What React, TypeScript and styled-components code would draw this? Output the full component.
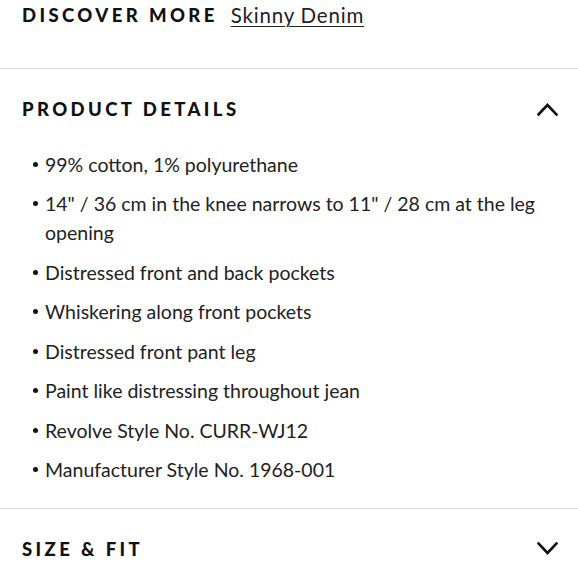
import React from "react";
import styled, { createGlobalStyle } from "styled-components";

const Global = createGlobalStyle`
  html, body { margin: 0; padding: 0; background: #fff; }
  body { font-family: "Lato", "Open Sans", sans-serif; color: #222; }
`;

const Page = styled.div`
  width: 578px;
`;

const DiscoverRow = styled.div`
  display: flex;
  align-items: center;
  gap: 13px;
  height: 30px;
  padding: 0 22px;
  margin-bottom: 38px;
`;

const Heading = styled.span`
  font-family: "Lato", sans-serif;
  font-weight: 900;
  font-size: 18.5px;
  letter-spacing: 3.4px;
  color: #111;
  text-transform: uppercase;
`;

const Link = styled.a`
  font-size: 20.5px;
  letter-spacing: 0.8px;
  color: #222;
  text-decoration: underline;
  text-underline-offset: 3px;
  text-decoration-thickness: 1px;
`;

const Section = styled.section`
  border-top: 1px solid #dcdcdc;
`;

const SectionHeader = styled.div`
  display: flex;
  align-items: center;
  justify-content: space-between;
  height: 80px;
  padding: 0 20px 0 22px;
`;

const List = styled.ul`
  list-style: none;
  margin: 0;
  padding: 0.5px 30px 23.5px 33px;
  display: flex;
  flex-direction: column;
  gap: 10.5px;
`;

const Item = styled.li`
  display: flex;
  font-size: 19.5px;
  line-height: 29px;
  color: #222;
`;

const Dot = styled.span`
  flex: none;
  width: 5px;
  height: 5px;
  border-radius: 50%;
  background: #111;
  margin: 12px 7px 0 0;
`;

const Chevron = ({ up }: { up?: boolean }) => (
  <svg width="21" height="13" viewBox="0 0 21 13" fill="none">
    <polyline
      points={up ? "1.5,11.5 10.5,2 19.5,11.5" : "1.5,1.5 10.5,11 19.5,1.5"}
      stroke="#111"
      strokeWidth="2.6"
      strokeLinecap="square"
    />
  </svg>
);

const items = [
  "99% cotton, 1% polyurethane",
  "14\" / 36 cm in the knee narrows to 11\" / 28 cm at the leg opening",
  "Distressed front and back pockets",
  "Whiskering along front pockets",
  "Distressed front pant leg",
  "Paint like distressing throughout jean",
  "Revolve Style No. CURR-WJ12",
  "Manufacturer Style No. 1968-001",
];

export default function App() {
  return (
    <Page>
      <Global />
      <DiscoverRow>
        <Heading>Discover More</Heading>
        <Link href="#">Skinny Denim</Link>
      </DiscoverRow>
      <Section>
        <SectionHeader>
          <Heading>Product Details</Heading>
          <Chevron up />
        </SectionHeader>
        <List>
          {items.map((t) => (
            <Item key={t}>
              <Dot />
              <span>{t}</span>
            </Item>
          ))}
        </List>
      </Section>
      <Section>
        <SectionHeader>
          <Heading>Size &amp; Fit</Heading>
          <Chevron />
        </SectionHeader>
      </Section>
    </Page>
  );
}
